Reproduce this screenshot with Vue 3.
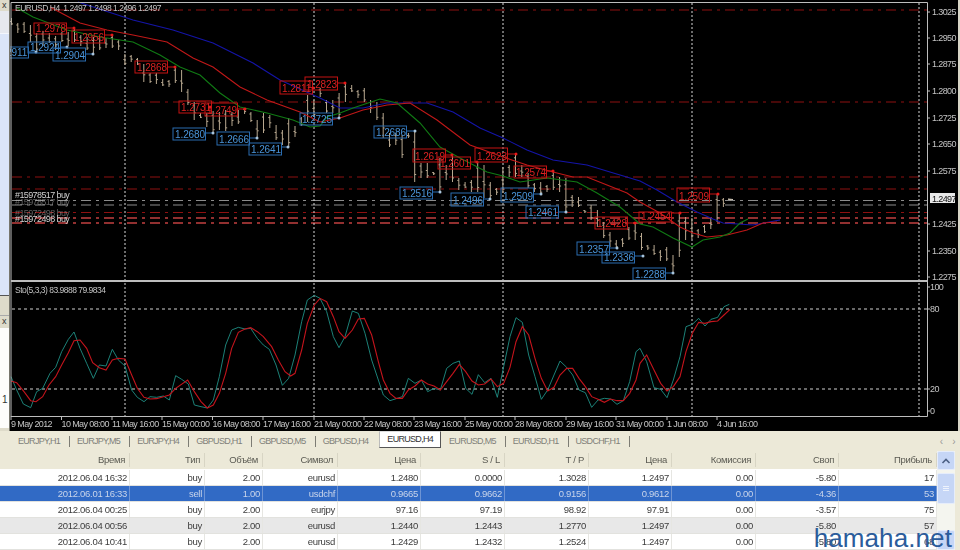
<script setup>
// bars are [high, low] in chart pixels, one every 6.3px
const barData = [
  [18,25],[23,33],[22,33],[25,42],[33,52],[31,46],[33,43],[36,50],[32,42],[32,46],
  [28,42],[35,46],[37,50],[37,54],[36,50],[38,48],[35,48],[40,50],[54,65],[55,62],
  [58,65],[64,82],[73,83],[73,84],[79,86],[80,87],[67,83],[70,92],[89,105],[102,120],
  [113,118],[113,127],[111,133],[112,130],[110,131],[112,126],[110,124],[108,114],[112,122],[120,138],
  [113,133],[115,128],[125,140],[130,145],[118,147],[126,137],[117,126],[95,122],[100,117],
  [88,97],[100,113],[100,113],[93,118],[83,102],[85,92],[90,98],[88,102],[100,113],[102,120],
  [113,138],[133,147],[133,145],[135,158],[133,138],[132,182],[163,178],[163,178],[172,175],[158,192],
  [165,180],[155,182],[178,190],[182,188],[180,192],[162,192],[165,198],[182,198],[188,195],[167,193],
  [165,177],[153,177],[165,177],[173,188],[183,192],[182,194],[185,192],[172,190],[177,192],[178,212],
  [195,207],[197,207],[210,213],[205,220],[210,227],[222,238],[232,247],[240,248],[238,247],[227,240],
  [222,240],[233,250],[245,250],[245,255],[250,261],[247,261],[255,273],[212,257],[217,240],[218,239],
  [229,238],[225,233],[218,229],[194,222],[198,207],[199,200]
]

const bars = barData.map(([hi, lo], i) => {
  const x = 11.5 + i * 6.3
  const range = lo - hi
  const open = hi + range * (i % 3 === 0 ? 0.5 : 0.2)
  const close = hi + range * (i % 2 === 0 ? 0.85 : 0.6)
  return `M${x} ${hi}V${lo}M${x - 1.5} ${open}H${x}M${x} ${close}H${x + 1.5}`
}).join('')

const line = pts => pts.map(p => p.join(',')).join(' ')

const blueMa = line([[78,2],[133,20],[173,30],[213,43],[253,63],[280,80],[320,98],[340,108],[363,108],[387,103],[427,103],[453,112],[480,128],[503,138],[527,150],[553,160],[587,165],[610,172],[640,181],[657,190],[677,202],[697,212],[713,219],[723,223],[753,225],[780,220]])
const redMa = line([[50,7],[80,23],[107,30],[133,35],[167,42],[193,58],[213,67],[240,87],[267,100],[300,112],[320,122],[340,118],[363,110],[387,105],[410,103],[437,120],[470,145],[503,157],[527,165],[553,172],[573,177],[587,177],[607,185],[627,193],[640,202],[660,213],[680,227],[693,233],[707,237],[727,235],[747,230],[763,223],[777,222]])
const greenMa = line([[17,8],[33,17],[67,30],[100,37],[133,42],[160,55],[180,67],[200,75],[220,93],[240,107],[267,113],[293,120],[310,127],[320,126],[327,117],[340,113],[353,108],[380,99],[397,103],[420,123],[440,147],[460,158],[487,172],[503,176],[520,182],[547,178],[577,182],[597,193],[620,207],[640,224],[653,227],[673,238],[692,247],[703,240],[720,237],[730,233],[740,223],[748,219]])

// stochastic traces, traced in 3x crops of three panels
const fromCrop = (ox, pts) => pts.map(([x, y]) => [ox + x / 3, 280 + y / 3])
const stoMain = line([
  ...fromCrop(0, [[33,290],[50,330],[70,372],[92,383],[110,335],[128,325],[150,280],[167,262],[185,215],[205,178],[222,156],[240,205],[260,250],[280,295],[298,255],[318,258],[337,208],[355,240],[375,258],[395,330],[412,352],[432,365],[450,350],[470,352],[490,348],[508,360],[527,287],[545,298],[565,312],[583,375],[603,380],[622,384],[640,360],[658,290],[677,195],[695,150],[715,142],[735,147],[752,145],[772,175],[790,195],[808,208],[828,255],[847,316],[866,295],[885,225],[905,125],[922,60],[943,46]]),
  ...fromCrop(320, [[0,55],[20,95],[40,170],[57,203],[75,170],[97,93],[115,100],[135,160],[155,240],[175,300],[190,345],[210,362],[247,350],[265,295],[285,310],[304,300],[323,335],[342,325],[361,330],[380,265],[399,250],[418,243],[437,325],[456,343],[475,284],[494,308],[513,295],[532,352],[551,260],[570,170],[588,113],[607,127],[626,225],[645,290],[664,358],[683,330],[702,285],[720,243],[740,262],[758,285],[777,330],[796,338],[815,382],[834,360],[853,355],[872,357],[891,373],[910,362],[929,305],[948,215]]),
  ...fromCrop(640, [[0,205],[20,245],[42,323],[62,328],[81,353],[100,300],[120,230],[138,140],[157,133],[176,115],[195,138],[213,118],[233,112],[252,80],[268,73]])
])
const stoSignal = line([
  ...fromCrop(0, [[33,303],[50,308],[72,335],[92,362],[108,365],[128,350],[147,315],[167,290],[185,255],[205,218],[222,182],[240,180],[260,205],[278,248],[298,263],[318,270],[337,240],[355,235],[375,237],[395,285],[412,325],[432,352],[450,357],[470,356],[490,350],[508,345],[527,325],[563,300],[583,335],[603,365],[622,384],[640,375],[658,340],[677,280],[695,205],[715,157],[735,147],[752,143],[772,155],[790,170],[815,200],[835,240],[855,275],[872,288],[885,280],[905,210],[922,130],[943,75]]),
  ...fromCrop(320, [[0,55],[20,65],[40,110],[57,155],[75,175],[97,150],[115,117],[133,115],[155,165],[175,245],[190,300],[210,340],[228,355],[247,355],[265,330],[285,318],[304,300],[323,312],[342,318],[361,330],[380,305],[399,280],[418,253],[437,275],[456,303],[475,315],[494,312],[513,297],[532,320],[551,310],[570,262],[588,185],[607,140],[626,165],[645,235],[664,295],[683,333],[702,322],[720,285],[740,265],[758,265],[777,295],[796,320],[815,350],[834,358],[853,367],[872,357],[891,362],[910,362],[929,340],[948,300]]),
  ...fromCrop(640, [[0,250],[20,225],[42,270],[62,310],[81,333],[100,320],[120,290],[138,215],[157,160],[176,127],[195,130],[213,125],[233,123],[252,105],[270,88]])
])

const levels = [
  { y: 10, cls: 'lv-dark' }, { y: 102, cls: 'lv-dark' }, { y: 177, cls: 'lv-dark' }, { y: 189, cls: 'lv-dark' },
  { y: 200.5, cls: 'lv-gray' }, { y: 205, cls: 'lv-gray' },
  { y: 212.5, cls: 'lv-dark' }, { y: 218, cls: 'lv-bright' }, { y: 223, cls: 'lv-bright' }
]
const gridX = [125, 314, 503, 692, 919]
const priceAxis = [
  ['1.3025', 12], ['1.2950', 38], ['1.2875', 64], ['1.2800', 91], ['1.2725', 118], ['1.2650', 144],
  ['1.2575', 171], ['1.2425', 224], ['1.2350', 251], ['1.2275', 277]
]
const stoAxis = [['100', 287], ['80', 309], ['20', 389], ['0', 411]]
const timeAxis = [
  ['9 May 2012', 11], ['10 May 08:00', 61.5], ['11 May 16:00', 112], ['15 May 00:00', 162], ['16 May 08:00', 212.5],
  ['17 May 16:00', 263], ['21 May 00:00', 314], ['22 May 08:00', 364], ['23 May 16:00', 414], ['25 May 00:00', 465],
  ['28 May 08:00', 515], ['29 May 16:00', 566], ['31 May 00:00', 616], ['1 Jun 08:00', 667], ['4 Jun 16:00', 717]
]

// text, box left, box top, box bottom, dot x, dot y
const redTags = [
  ['1.2978',34,23,34,74,28], ['1.2956',72,30,43,112,35], ['1.2868',135,61,73,175,67], ['1.2731',179,101,113,210,107],
  ['1.2749',205,103,116,245,109], ['1.2811',280,81,94,313,88], ['1.2823',305,77,90,345,83], ['1.2619',413,149,162,452,155],
  ['1.2601',438,157,169,477,162], ['1.2623',475,148,162,516,154], ['1.2574',514,166,178,553,171], ['1.2428',595,217,229,635,223],
  ['1.2454',639,212,222,680,213], ['1.2509',677,188,202,718,194]
]
const blueTags = [
  ['1.2911',-4,47,58,36,52], ['1.2924',28,42,53,67,47], ['1.2904',53,48,61,93,54], ['1.2680',173,128,140,213,133],
  ['1.2666',217,132,145,257,138], ['1.2641',249,143,155,288,147], ['1.2725',300,113,125,339,118], ['1.2686',374,126,138,415,131],
  ['1.2516',400,187,199,440,192], ['1.2496',451,193,206,490,199], ['1.2509',501,188,202,541,194], ['1.2461',526,206,218,566,212],
  ['1.2357',577,242,255,617,248], ['1.2336',602,252,263,643,256], ['1.2288',633,268,280,673,273]
]

const tabs = ['EURJPY,H1', 'EURJPY,M5', 'EURJPY,H4', 'GBPUSD,H1', 'GBPUSD,M5', 'GBPUSD,H4', 'EURUSD,H4', 'EURUSD,M5', 'EURUSD,H1', 'USDCHF,H1']
const activeTab = 'EURUSD,H4'

const columns = ['Время', 'Тип', 'Объём', 'Символ', 'Цена', 'S / L', 'T / P', 'Цена', 'Комиссия', 'Своп', 'Прибыль']
const rows = [
  ['2012.06.04 16:32', 'buy', '2.00', 'eurusd', '1.2480', '0.0000', '1.3028', '1.2497', '0.00', '-5.80', '17'],
  ['2012.06.01 16:33', 'sell', '1.00', 'usdchf', '0.9665', '0.9662', '0.9156', '0.9612', '0.00', '-4.36', '53'],
  ['2012.06.04 00:25', 'buy', '2.00', 'eurjpy', '97.16', '97.19', '98.92', '97.91', '0.00', '-3.57', '75'],
  ['2012.06.04 00:56', 'buy', '2.00', 'eurusd', '1.2440', '1.2443', '1.2770', '1.2497', '0.00', '-5.80', '57'],
  ['2012.06.04 10:41', 'buy', '2.00', 'eurusd', '1.2429', '1.2432', '1.2524', '1.2497', '0.00', '-5.80', '68']
]
</script>

<template>
  <div class="terminal">
    <div class="workspace">
      <!-- Clipped navigator panels on the left -->
      <div class="side">
        <div class="side-head">x</div>
        <div class="side-gap"></div>
        <div class="side-blue"></div>
        <div class="side-head side-head-low">x</div>
        <div class="side-white">1</div>
      </div>

      <svg class="chart" viewBox="10 0 948 431" width="948" height="431">
        <rect x="10" y="0" width="948" height="431" fill="#000" />
        <line v-for="l in levels" :key="l.y" :class="['level', l.cls]" x1="12" x2="927" :y1="l.y" :y2="l.y" />
        <line v-for="x in gridX" :key="x" class="grid-v" :x1="x" :x2="x" y1="3" y2="416" />
        <line class="grid-h" x1="12" x2="927" y1="309" y2="309" />
        <line class="grid-h" x1="12" x2="927" y1="389" y2="389" />

        <path :d="bars" class="bars" />
        <polyline :points="blueMa" class="ma" stroke="#1414a8" />
        <polyline :points="redMa" class="ma" stroke="#c01818" />
        <polyline :points="greenMa" class="ma" stroke="#107a14" />
        <line x1="728" x2="733" y1="199" y2="199.5" stroke="#d8d0c0" stroke-width="1" />

        <polyline :points="stoMain" class="ma ma-thin" stroke="#1f8f84" />
        <polyline :points="stoSignal" class="ma" stroke="#c4141c" />

        <text class="t-head" x="15" y="11">EURUSD,H4&#160; 1.2497 1.2498 1.2496 1.2497</text>
        <text class="t-head" x="15" y="293">Sto(5,3,3) 83.9888 79.9834</text>
        <text class="t-order" x="15" y="198">#15978517 buy</text>
        <text class="t-order t-faint" x="15" y="205">#15978517 buy</text>
        <text class="t-order t-faint" x="15" y="216">#15972498 buy</text>
        <text class="t-order" x="15" y="222">#15972498 buy</text>

        <g v-for="t in redTags" :key="t[0]" class="tag tag-red">
          <rect :x="t[1]" :y="t[2]" width="32.5" :height="t[3] - t[2]" />
          <line :x1="t[1] + 32.5" :x2="t[4]" :y1="t[5]" :y2="t[5]" />
          <circle :cx="t[4]" :cy="t[5]" r="1.5" />
          <text :x="t[1] + 2" :y="t[3] - 2.5">{{ t[0] }}</text>
        </g>
        <g v-for="t in blueTags" :key="t[0]" class="tag tag-blue">
          <rect :x="t[1]" :y="t[2]" width="32.5" :height="t[3] - t[2]" />
          <line :x1="t[1] + 32.5" :x2="t[4]" :y1="t[5]" :y2="t[5]" />
          <circle :cx="t[4]" :cy="t[5]" r="1.5" />
          <text :x="t[1] + 2" :y="t[3] - 2.5">{{ t[0] }}</text>
        </g>

        <!-- Window frame and axes -->
        <path class="frame" d="M11 2.5H927.5V416.5H11Z" />
        <path class="frame frame-split" d="M11 281H927.5" />
        <g v-for="a in priceAxis" :key="a[0]">
          <line class="tick" x1="927" x2="930" :y1="a[1]" :y2="a[1]" />
          <text class="t-axis" x="932" :y="a[1] + 3">{{ a[0] }}</text>
        </g>
        <rect x="930" y="193" width="25" height="10" fill="#e8e8e8" />
        <text class="t-axis t-now" x="932" y="201.5">1.2497</text>
        <g v-for="a in stoAxis" :key="a[0]">
          <line class="tick" x1="927" x2="930" :y1="a[1]" :y2="a[1]" />
          <text class="t-axis" x="930" :y="a[1] + 3">{{ a[0] }}</text>
        </g>
        <g v-for="a in timeAxis" :key="a[0]">
          <line class="tick" :x1="a[1]" :x2="a[1]" y1="416" y2="420" />
          <text class="t-axis" :x="a[1]" y="427">{{ a[0] }}</text>
        </g>
      </svg>
      <div class="chart-edge"></div>
    </div>

    <div class="tabs">
      <span v-for="t in tabs" :key="t" class="tab" :class="{ active: t === activeTab }">{{ t }}</span>
      <span class="tab-arrows"><i>‹</i><i>›</i></span>
    </div>

    <div class="table-wrap">
      <div class="table">
        <div class="row head">
          <div v-for="(c, i) in columns" :key="i" class="cell">{{ c }}</div>
        </div>
        <div
          v-for="(r, i) in rows"
          :key="i"
          class="row"
          :class="{ selected: i === 1, shaded: i === 3 }"
        >
          <div v-for="(v, j) in r" :key="j" class="cell">{{ v }}</div>
        </div>
      </div>
      <div class="scrollbar">
        <div class="sb-btn">
          <svg width="10" height="8" viewBox="0 0 10 8"><path d="M1.5 6L5 2.5 8.5 6" fill="none" stroke="#4d6185" stroke-width="1.6" /></svg>
        </div>
        <div class="sb-thumb"><span></span><span></span><span></span></div>
        <div class="sb-track"></div>
        <div class="sb-btn sb-btn-low"></div>
      </div>
      <div class="watermark">hamaha.net</div>
    </div>
  </div>
</template>

<style>
html, body {
  margin: 0;
  background: #ece9d8;
}
</style>

<style scoped>
.terminal {
  position: relative;
  width: 960px;
  height: 550px;
  overflow: hidden;
  display: flex;
  flex-direction: column;
  background: #ece9d8;
  font-family: "Liberation Sans", Arial, sans-serif;
}

.workspace {
  display: flex;
  height: 431px;
  flex-shrink: 0;
}

.side {
  width: 10px;
  flex-shrink: 0;
  display: flex;
  flex-direction: column;
  background: #dedbca;
  border-right: 1px solid #77766c;
  box-sizing: border-box;
  font-size: 9px;
  color: #333;
  overflow: hidden;
}
.side-head {
  height: 11px;
  line-height: 11px;
  text-indent: 2px;
}
.side-gap {
  height: 22px;
  background: #e6e8ee;
}
.side-blue {
  height: 261px;
  background: #dbe5f8;
  border-top: 1px solid #f4f6fb;
  border-bottom: 1px solid #555;
}
.side-head-low {
  margin-top: 19px;
  height: 12px;
  border-top: 1px solid #aaa;
}
.side-white {
  flex: 1;
  background: #fdfdfb;
  padding-top: 66px;
  text-indent: 2px;
  margin-bottom: 3px;
  font-size: 10px;
}

.chart {
  display: block;
  flex-shrink: 0;
  filter: blur(0.3px);
}
.chart-edge {
  flex: 1;
  background: #d8d5c6;
}

.level {
  stroke-width: 1;
  stroke-dasharray: 10 5 3 5;
}
.lv-dark { stroke: #8e1010; }
.lv-gray { stroke: #8c8c8c; }
.lv-bright { stroke: #c24040; stroke-width: 1.4; }
.grid-v {
  stroke: #d8d8d8;
  stroke-dasharray: 2 2;
}
.grid-h {
  stroke: #d0d0d0;
  stroke-dasharray: 3 3;
}
.bars {
  stroke: #b8a890;
  stroke-width: 1;
  fill: none;
}
.ma {
  fill: none;
  stroke-width: 1.1;
}
.ma-thin { stroke-width: 0.9; }
.frame {
  fill: none;
  stroke: #bdbdbd;
  stroke-width: 1;
}
.frame-split { stroke-width: 2; }
.tick { stroke: #bdbdbd; }

.t-head,
.t-order,
.t-axis {
  font-size: 9px;
  letter-spacing: -0.6px;
  fill: #c4c4c4;
}
.t-head {
  font-size: 8.5px;
  letter-spacing: -0.5px;
}
.t-order { fill: #d0d0d0; }
.t-faint { opacity: 0.45; }
.t-now { fill: #111; }

.tag rect {
  fill: none;
  stroke-width: 1;
}
.tag line { stroke-width: 1; }
.tag text {
  font-size: 10px;
  letter-spacing: -0.1px;
}
.tag-red rect,
.tag-red line { stroke: #c41212; }
.tag-red text { fill: #dc2222; }
.tag-red circle { fill: #e81818; }
.tag-blue rect,
.tag-blue line { stroke: #2a6cb0; }
.tag-blue text { fill: #4a94d8; }
.tag-blue circle { fill: #a8c4dc; }

.tabs {
  height: 20px;
  flex-shrink: 0;
  display: flex;
  align-items: center;
  box-sizing: border-box;
  padding-left: 11px;
  background: #ece9d8;
  font-size: 9px;
  letter-spacing: -0.7px;
  color: #807f78;
}
.tab {
  height: 11px;
  line-height: 11px;
  padding: 0 9px 0 7px;
  border-right: 1px solid #7d7c74;
  white-space: nowrap;
}
.tab:nth-child(6),
.tab.active { border-right: 0; }
.tab.active {
  height: 15px;
  line-height: 15px;
  margin: 0 1px 3px 2px;
  padding: 0 7px;
  background: #fff;
  color: #333;
  border: 1px solid #555;
  border-top-color: #ddd;
  border-left-color: #bbb;
}
.tab-arrows {
  margin-left: auto;
  display: flex;
  gap: 10px;
  padding-right: 5px;
  color: #999;
  font-size: 10px;
}
.tab-arrows i { font-style: normal; }

.table-wrap {
  flex: 1;
  display: flex;
  min-height: 0;
}
.table {
  width: 937px;
  flex-shrink: 0;
  font-size: 9.5px;
  letter-spacing: -0.3px;
  color: #3c3c3c;
  filter: blur(0.25px);
}
.row {
  display: grid;
  grid-template-columns: 130px 75px 58px 75px 83px 84px 84px 83px 84px 83px 98px;
  height: 16px;
  line-height: 15px;
  box-sizing: border-box;
  background: #fff;
  border-bottom: 1px solid #e2e2de;
}
.row.head {
  height: 19px;
  background: #ece9d8;
  border-bottom: 1px solid #fff;
  color: #5a5a52;
}
.row.head .cell {
  padding-right: 4px;
  margin: 2px 0;
  line-height: 14px;
  border-right: 1px solid #d8d5c4;
}
.row.selected {
  background: #316ac5;
  color: #c8d4ea;
}
.row.shaded { background: #e8e8e8; }
.cell {
  text-align: right;
  padding-right: 2px;
  border-right: 1px solid #e6e6e2;
  white-space: nowrap;
}
.row.selected .cell { border-right-color: #6e94d4; }

.scrollbar {
  width: 18px;
  flex-shrink: 0;
  display: flex;
  flex-direction: column;
  background: #f4f5ef;
}
.sb-btn {
  height: 19px;
  flex-shrink: 0;
  background: #c6d6f6;
  border: 1px solid #e6edfb;
  box-sizing: border-box;
  border-radius: 2px;
  display: flex;
  align-items: center;
  justify-content: center;
}
.sb-thumb {
  height: 31px;
  margin-top: 3px;
  background: #c6d6f6;
  border: 1px solid #e6edfb;
  box-sizing: border-box;
  border-radius: 2px;
  display: flex;
  flex-direction: column;
  align-items: center;
  justify-content: center;
  gap: 1px;
}
.sb-thumb span {
  width: 6px;
  height: 1px;
  background: #eef3fc;
}
.sb-track { flex: 1; }
.sb-btn-low { height: 20px; }

.watermark {
  position: absolute;
  right: 8px;
  bottom: -1px;
  font-size: 26px;
  line-height: 26px;
  color: #2b5c9b;
  letter-spacing: 0.1px;
}
</style>
